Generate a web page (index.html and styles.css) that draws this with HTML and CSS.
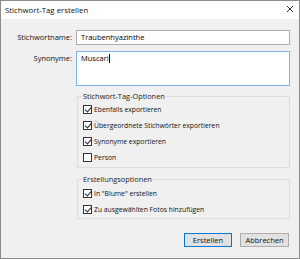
FILE: index.html
```html
<!DOCTYPE html>
<html lang="de">
<head>
    <meta charset="UTF-8">
    <title>Stichwort-Tag erstellen</title>
    <link rel="stylesheet" href="styles.css">
</head>
<body>
    <div class="dialog">
        <div class="titlebar">
            <span class="title">Stichwort-Tag erstellen</span>
            <svg class="close" width="8" height="8" viewBox="0 0 8 8">
                <path d="M1 1 L7 7 M7 1 L1 7" stroke="#333" stroke-width="1" fill="none"/>
            </svg>
        </div>

        <div class="content">
            <div class="form-grid">
                <label class="field-label">Stichwortname:</label>
                <div class="text-input">Traubenhyazinthe</div>

                <label class="field-label top">Synonyme:</label>
                <div class="text-area">Muscari<span class="caret"></span></div>
            </div>

            <fieldset class="group first">
                <legend>Stichwort-Tag-Optionen</legend>
                <div class="check-row"><span class="box checked"></span>Ebenfalls exportieren</div>
                <div class="check-row"><span class="box checked"></span>Übergeordnete Stichwörter exportieren</div>
                <div class="check-row"><span class="box checked"></span>Synonyme exportieren</div>
                <div class="check-row"><span class="box"></span>Person</div>
            </fieldset>

            <fieldset class="group second">
                <legend>Erstellungsoptionen</legend>
                <div class="check-row"><span class="box checked"></span>In "Blume" erstellen</div>
                <div class="check-row"><span class="box checked"></span>Zu ausgewählten Fotos hinzufügen</div>
            </fieldset>

            <div class="buttons">
                <button class="btn default">Erstellen</button>
                <button class="btn">Abbrechen</button>
            </div>
        </div>
    </div>
</body>
</html>
```

FILE: styles.css
```css
* {
    margin: 0;
    padding: 0;
    box-sizing: border-box;
}

body {
    font-family: 'Open Sans', 'Noto Sans', Arial, sans-serif;
    color: #000;
    background: #fff;
}

.dialog {
    width: 300px;
    height: 259px;
    border: 1px solid #8c8c8c;
    background: #f0f0f0;
    display: flex;
    flex-direction: column;
}

.titlebar {
    height: 18px;
    background: #fff;
    display: flex;
    align-items: center;
    justify-content: space-between;
    padding: 0 5px 0 4px;
    font-size: 7.8px;
    color: #111;
}

.close {
    margin-top: -2px;
}

.content {
    flex: 1;
    padding: 11px 9px 0 9px;
}

/* Eingabefelder oben */
.form-grid {
    display: grid;
    grid-template-columns: 62px 1fr;
    column-gap: 4px;
    row-gap: 6px;
}

.field-label {
    font-size: 7.5px;
    text-align: right;
    line-height: 15px;
    color: #111;
}

.field-label.top {
    line-height: 14px;
}

.text-input {
    height: 15px;
    border: 1px solid #adadad;
    background: #fff;
    font-size: 7.5px;
    line-height: 13px;
    padding-left: 4px;
}

.text-area {
    height: 35px;
    border: 1px solid #7eb4ea;
    background: #fff;
    font-size: 7.5px;
    line-height: 13px;
    padding-left: 4px;
}

.caret {
    display: inline-block;
    width: 1px;
    height: 9px;
    background: #000;
    vertical-align: -2px;
}

/* Gruppen */
.group {
    border: 1px solid #dcdcdc;
    margin-left: 67px;
    padding: 0 5px 2px 5px;
}

.group.first {
    margin-top: 5px;
}

.group.second {
    margin-top: 6px;
    padding-top: 1px;
    padding-bottom: 1px;
}

.group legend {
    font-size: 7.4px;
    line-height: 10px;
    padding: 0 1px;
    margin-left: -1px;
    color: #222;
}

.check-row {
    display: flex;
    align-items: center;
    height: 16px;
    font-size: 6.8px;
    color: #111;
}

.box {
    width: 9px;
    height: 9px;
    border: 1px solid #333;
    background: #fff;
    margin-right: 2px;
    flex-shrink: 0;
    position: relative;
}

.box.checked::after {
    content: "";
    position: absolute;
    left: 2px;
    top: 0px;
    width: 3px;
    height: 5px;
    border-right: 1px solid #222;
    border-bottom: 1px solid #222;
    transform: rotate(40deg);
}

/* Schaltflächen */
.buttons {
    display: flex;
    justify-content: flex-end;
    gap: 8px;
    margin-top: 14px;
    padding-right: 1px;
}

.btn {
    height: 14px;
    width: 49px;
    font-family: inherit;
    font-size: 7.5px;
    line-height: 12px;
    background: #e1e1e1;
    border: 1px solid #adadad;
    color: #111;
}

.btn.default {
    width: 48px;
    border-color: #0078d7;
}
```
